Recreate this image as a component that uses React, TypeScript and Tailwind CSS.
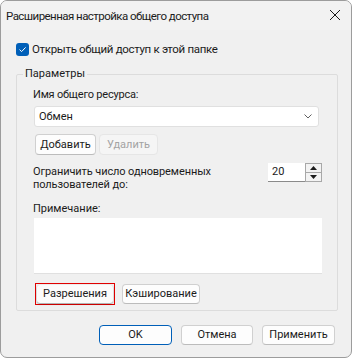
import React from "react";

const font = { fontFamily: '"Segoe UI", Roboto, "Noto Sans", sans-serif' };

function Btn({ children, className = "" }: { children: React.ReactNode; className?: string }) {
  return (
    <div
      className={
        "flex items-center justify-center rounded-[4px] border border-[#d0d0d0] border-b-[#bcbcbc] bg-[#fdfdfd] text-[#1b1b1b] " +
        className
      }
    >
      {children}
    </div>
  );
}

export default function App() {
  return (
    <div className="w-[353px] h-[359px] bg-white text-[11px] leading-[16px] text-[#1b1b1b]" style={font}>
      <div className="w-[352px] h-[358px] rounded-[7px] border border-[#9c9c9c] bg-[#f0f0f0] flex flex-col overflow-hidden">
        {/* Title bar */}
        <div className="h-[29px] flex items-center justify-between pl-[5px] pr-[10px] bg-[#f2f2f2]">
          <span className="text-[11.5px] tracking-[-0.55px]">Расширенная настройка общего доступа</span>
          <svg width="12" height="12" viewBox="0 0 12 12" className="mt-[-1px]">
            <path d="M1 1 L11 11 M11 1 L1 11" stroke="#1b1b1b" strokeWidth="1" />
          </svg>
        </div>
        <div className="px-[15px]">
          {/* Checkbox */}
          <div className="flex items-center mt-[12px] h-[14px]">
            <div className="w-[13px] h-[13px] rounded-[3px] bg-[#005fb8] flex items-center justify-center">
              <svg width="9" height="9" viewBox="0 0 9 9">
                <path d="M1.5 4.6 L3.6 6.6 L7.6 2.4" fill="none" stroke="white" strokeWidth="1" />
              </svg>
            </div>
            <span className="ml-[3px] text-[11.5px] tracking-[-0.32px]">Открыть общий доступ к этой папке</span>
          </div>
          {/* Group box */}
          <fieldset className="mt-[10px] border border-[#dcdcdc] rounded-[2px] h-[245px] pl-[16px] pr-[14px] pt-0 pb-0 w-[322px]">
            <legend className="ml-[-10px] px-[2px] leading-[16px]">Параметры</legend>
            <div className="mt-[5px] leading-[16px] tracking-[-0.2px]">Имя общего ресурса:</div>
            <div className="mt-[3px] ml-[1px] h-[21px] w-[285px] rounded-[3px] border border-[#e0e0e0] bg-white flex items-center justify-between pl-[4px] pr-[6px]">
              <span>Обмен</span>
              <svg width="8" height="5" viewBox="0 0 8 5">
                <path d="M0.5 0.5 L4 4 L7.5 0.5" fill="none" stroke="#606060" strokeWidth="1" />
              </svg>
            </div>
            <div className="mt-[7px] ml-[2px] flex gap-[3px]">
              <Btn className="w-[61px] h-[21px]">Добавить</Btn>
              <div className="w-[59px] h-[21px] flex items-center justify-center rounded-[4px] border border-[#e6e6e6] bg-[#f5f5f5] text-[#a3a3a3]">
                Удалить
              </div>
            </div>
            <div className="mt-[8px] flex justify-between">
              <div className="leading-[13px] pt-[2px] tracking-[-0.1px]">
                Ограничить число одновременных
                <br />
                пользователей до:
              </div>
              <div className="flex mt-[0px] mr-[1px]">
                <div className="w-[37px] h-[19px] bg-white border-b border-[#8a8a8a] flex items-center pl-[4px]">20</div>
                <div className="flex flex-col w-[17px] h-[19px]">
                  <div className="flex-1 border border-[#a8a8a8] bg-[#f3f3f3] flex items-center justify-center">
                    <svg width="7" height="4" viewBox="0 0 7 4">
                      <path d="M0 4 L3.5 0 L7 4 Z" fill="#1b1b1b" />
                    </svg>
                  </div>
                  <div className="flex-1 border border-t-0 border-[#a8a8a8] bg-[#f3f3f3] flex items-center justify-center">
                    <svg width="7" height="4" viewBox="0 0 7 4">
                      <path d="M0 0 L3.5 4 L7 0 Z" fill="#1b1b1b" />
                    </svg>
                  </div>
                </div>
              </div>
            </div>
            <div className="mt-[10px] leading-[16px]">Примечание:</div>
            <div className="mt-[1px] ml-[1px] h-[56px] w-[288px] bg-white border-b border-[#e0e0e0]"></div>
            <div className="mt-[9px] ml-[2px] flex gap-[7px] items-center">
              <div className="w-[80px] h-[22px] border border-[#e00000] flex items-center justify-center">
                <div className="w-[76px] h-[18px] rounded-[3px] bg-[#fbfbfb] shadow-[0_1px_2px_rgba(0,0,0,0.35)] flex items-center justify-center">
                  Разрешения
                </div>
              </div>
              <Btn className="w-[78px] h-[20px]">Кэширование</Btn>
            </div>
          </fieldset>
          {/* Bottom buttons */}
          <div className="mt-[14px] flex justify-end gap-[9px] pr-[1px]">
            <div className="w-[73px] h-[20px] rounded-[4px] border border-[#005fb8] bg-[#fdfdfd] flex items-center justify-center">
              OK
            </div>
            <Btn className="w-[72px] h-[20px]">Отмена</Btn>
            <Btn className="w-[73px] h-[20px]">Применить</Btn>
          </div>
        </div>
      </div>
    </div>
  );
}
